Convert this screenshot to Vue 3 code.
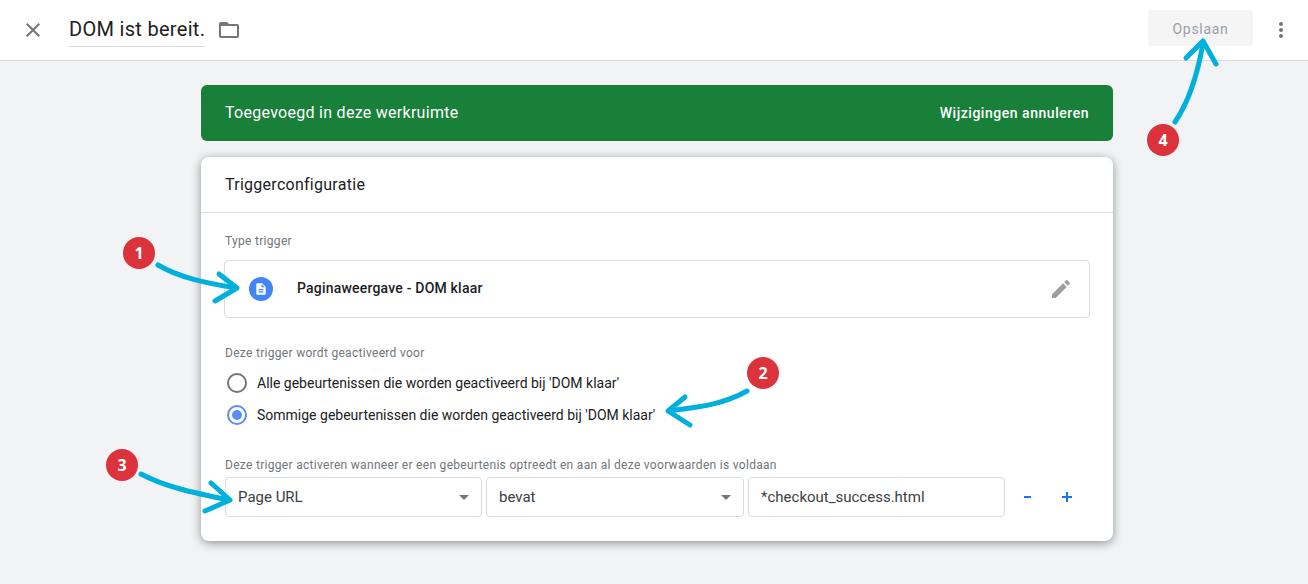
<script setup>
const arrows = [
  { tail: 'M158 265C178 277 205 283 236 288', head: 'M219 274L237 288L215 301' },
  { tail: 'M747 391C722 405 698 407 669 411', head: 'M685 397L668 411L690 425' },
  { tail: 'M141 474C165 487 195 493 229 500', head: 'M211 483L230 500L205 511' },
  { tail: 'M1175 122C1190 100 1198 72 1203 43', head: 'M1186 58L1203 41L1216 64' }
]
const badges = [
  { n: 1, x: 139, y: 253 },
  { n: 2, x: 763, y: 373 },
  { n: 3, x: 122, y: 465 },
  { n: 4, x: 1163, y: 140 }
]
const conditions = [
  { text: 'Page URL', arrow: true, wide: false },
  { text: 'bevat', arrow: true, wide: true },
  { text: '*checkout_success.html', arrow: false, wide: false }
]
</script>

<template>
  <div class="page">
    <header class="topbar">
      <svg class="close" width="24" height="24" viewBox="0 0 24 24"><path d="M19 6.41 17.59 5 12 10.59 6.41 5 5 6.41 10.59 12 5 17.59 6.41 19 12 13.41 17.59 19 19 17.59 13.41 12z" fill="#757575"/></svg>
      <div class="title">DOM ist bereit.</div>
      <svg class="folder" width="24" height="24" viewBox="0 0 24 24"><path d="M20 6h-8l-2-2H4c-1.1 0-1.99.9-1.99 2L2 18c0 1.1.9 2 2 2h16c1.1 0 2-.9 2-2V8c0-1.1-.9-2-2-2zm0 12H4V8h16v10z" fill="#757575"/></svg>
      <div class="spacer"></div>
      <button class="save">Opslaan</button>
      <svg class="more" width="24" height="24" viewBox="0 0 24 24"><path d="M12 8c1.1 0 2-.9 2-2s-.9-2-2-2-2 .9-2 2 .9 2 2 2zm0 2c-1.1 0-2 .9-2 2s.9 2 2 2 2-.9 2-2-.9-2-2-2zm0 6c-1.1 0-2 .9-2 2s.9 2 2 2 2-.9 2-2-.9-2-2-2z" fill="#757575"/></svg>
    </header>

    <main class="main">
      <div class="notice">
        <span class="added">Toegevoegd in deze werkruimte</span>
        <span class="discard">Wijzigingen annuleren</span>
      </div>

      <section class="card">
        <div class="card-title">Triggerconfiguratie</div>
        <div class="card-body">
          <div class="label">Type trigger</div>
          <div class="type-box">
            <span class="type-icon">
              <svg width="14" height="14" viewBox="0 0 24 24"><path d="M14 2H6c-1.1 0-2 .9-2 2v16c0 1.1.9 2 2 2h12c1.1 0 2-.9 2-2V8l-6-6zm2 16H8v-2h8v2zm0-4H8v-2h8v2zm-3-5V3.5L18.5 9H13z" fill="#fff"/></svg>
            </span>
            <span class="type-name">Paginaweergave - DOM klaar</span>
            <svg class="pencil" width="24" height="24" viewBox="0 0 24 24"><path d="M3 17.25V21h3.75L17.81 9.94l-3.75-3.75L3 17.25zM20.71 7.04a1 1 0 0 0 0-1.41l-2.34-2.34a1 1 0 0 0-1.41 0l-1.83 1.83 3.75 3.75 1.83-1.83z" fill="#9e9e9e"/></svg>
          </div>

          <div class="label fires">Deze trigger wordt geactiveerd voor</div>
          <div class="radio-row">
            <span class="radio"></span>
            <span>Alle gebeurtenissen die worden geactiveerd bij 'DOM klaar'</span>
          </div>
          <div class="radio-row">
            <span class="radio on"></span>
            <span>Sommige gebeurtenissen die worden geactiveerd bij 'DOM klaar'</span>
          </div>

          <div class="label when">Deze trigger activeren wanneer er een gebeurtenis optreedt en aan al deze voorwaarden is voldaan</div>
          <div class="conditions">
            <div v-for="c in conditions" :key="c.text" class="field" :class="{ wide: c.wide }">
              <span>{{ c.text }}</span>
              <span v-if="c.arrow" class="caret"></span>
            </div>
            <span class="op minus"></span>
            <span class="op plus"></span>
          </div>
        </div>
      </section>
    </main>

    <svg class="marks" width="1308" height="584" viewBox="0 0 1308 584">
      <g v-for="(a, i) in arrows" :key="i" fill="none" stroke="#00b0dc" stroke-width="5" stroke-linecap="round" stroke-linejoin="round">
        <path :d="a.tail"/>
        <path :d="a.head"/>
      </g>
    </svg>
    <span v-for="b in badges" :key="b.n" class="badge" :style="{ left: b.x - 16 + 'px', top: b.y - 16 + 'px' }">{{ b.n }}</span>
  </div>
</template>

<style>
html, body { margin: 0; background: #f1f3f4; }
</style>

<style scoped>
.page {
  position: relative;
  width: 1308px;
  height: 584px;
  overflow: hidden;
  background: #f1f3f4;
  font-family: Roboto, "Liberation Sans", sans-serif;
  color: #202124;
}
.topbar {
  height: 59px;
  padding-bottom: 1px;
  background: #fff;
  border-bottom: 1px solid #dadce0;
  display: flex;
  align-items: center;
  padding-left: 21px;
  padding-right: 15px;
}
.close { flex: none; margin-right: 24px; }
.title {
  font-size: 20px;
  line-height: 28px;
  letter-spacing: 0.3px;
  padding: 0 0 3px;
  border-bottom: 1px solid #dadce0;
  margin-top: 3px;
  margin-right: 12px;
}
.folder { flex: none; }
.spacer { flex: 1; }
.save {
  width: 105px;
  height: 36px;
  border: 0;
  border-radius: 4px;
  background: #f5f5f5;
  color: #9aa0a6;
  font: 400 14px Roboto, sans-serif;
  letter-spacing: 0.7px;
  margin-right: 16px;
  margin-bottom: 3px;
  padding: 2px 0 0;
}
.main { padding: 24px 195px 0 201px; }
.notice {
  height: 56px;
  background: #188038;
  color: #fff;
  border-radius: 6px;
  display: flex;
  align-items: center;
  justify-content: space-between;
  padding: 0 24px;
  font-size: 16px;
}
.added { letter-spacing: 0.28px; margin-bottom: 2px; }
.discard { font-size: 14px; font-weight: 500; letter-spacing: 0.53px; }
.card {
  margin-top: 16px;
  height: 384px;
  background: #fff;
  border-radius: 8px;
  box-shadow: 0 2px 10px rgba(60, 64, 67, 0.55);
}
.card-title {
  height: 55px;
  line-height: 55px;
  padding-left: 24px;
  font-size: 16px;
  letter-spacing: 0.27px;
  border-bottom: 1px solid #dadce0;
}
.card-body { padding: 0 23px; }
.label {
  font-size: 12px;
  line-height: 16px;
  letter-spacing: 0.3px;
  color: #70757a;
  padding-left: 1px;
}
.card-body > .label:first-child { padding-top: 20px; }
.type-box {
  margin-top: 11px;
  height: 56px;
  border: 1px solid #dadce0;
  border-radius: 4px;
  display: flex;
  align-items: center;
  padding-left: 24px;
  padding-right: 16px;
}
.type-icon {
  width: 24px;
  height: 24px;
  border-radius: 50%;
  background: #4285f4;
  display: flex;
  align-items: center;
  justify-content: center;
  margin-right: 24px;
}
.type-name {
  flex: 1;
  font-size: 14px;
  font-weight: 500;
  letter-spacing: 0.2px;
  color: #202124;
  margin-bottom: 2px;
}
.pencil { flex: none; }
.fires { margin-top: 27px; }
.radio-row {
  height: 32px;
  display: flex;
  align-items: center;
  font-size: 14px;
  padding-left: 3px;
  gap: 10px;
}
.fires + .radio-row { margin-top: 6px; }
.radio {
  flex: none;
  box-sizing: border-box;
  width: 20px;
  height: 20px;
  border-radius: 50%;
  border: 2px solid #757575;
  position: relative;
}
.radio.on { border-color: #5c8df6; }
.radio.on::after {
  content: "";
  position: absolute;
  inset: 3px;
  border-radius: 50%;
  background: #5c8df6;
}
.when { margin-top: 26px; }
.conditions {
  margin-top: 4px;
  display: flex;
  align-items: center;
  gap: 4px;
  padding-left: 1px;
}
.field {
  box-sizing: border-box;
  width: 257px;
  height: 40px;
  border: 1px solid #dadce0;
  border-radius: 4px;
  display: flex;
  align-items: center;
  justify-content: space-between;
  padding: 0 12px;
  font-size: 15px;
  color: #3c4043;
}
.field.wide { width: 258px; }
.caret {
  width: 0;
  height: 0;
  border-left: 5.5px solid transparent;
  border-right: 5.5px solid transparent;
  border-top: 5.5px solid #757575;
}
.op {
  position: relative;
  width: 10px;
  height: 10px;
  flex: none;
}
.op::before {
  content: "";
  position: absolute;
  left: 0;
  right: 0;
  top: 4px;
  height: 2px;
  background: #1a73e8;
}
.minus { margin-left: 13px; }
.minus::before { left: 2px; right: 1px; }
.plus { margin-left: 26px; }
.plus::after {
  content: "";
  position: absolute;
  left: 4px;
  top: 0;
  bottom: 0;
  width: 2px;
  background: #1a73e8;
}
.marks { position: absolute; left: 0; top: 0; pointer-events: none; }
.badge {
  position: absolute;
  width: 32px;
  height: 32px;
  border-radius: 50%;
  background: #dc323c;
  color: #fff;
  font: 700 16px/32px "Open Sans", sans-serif;
  text-align: center;
}
</style>
